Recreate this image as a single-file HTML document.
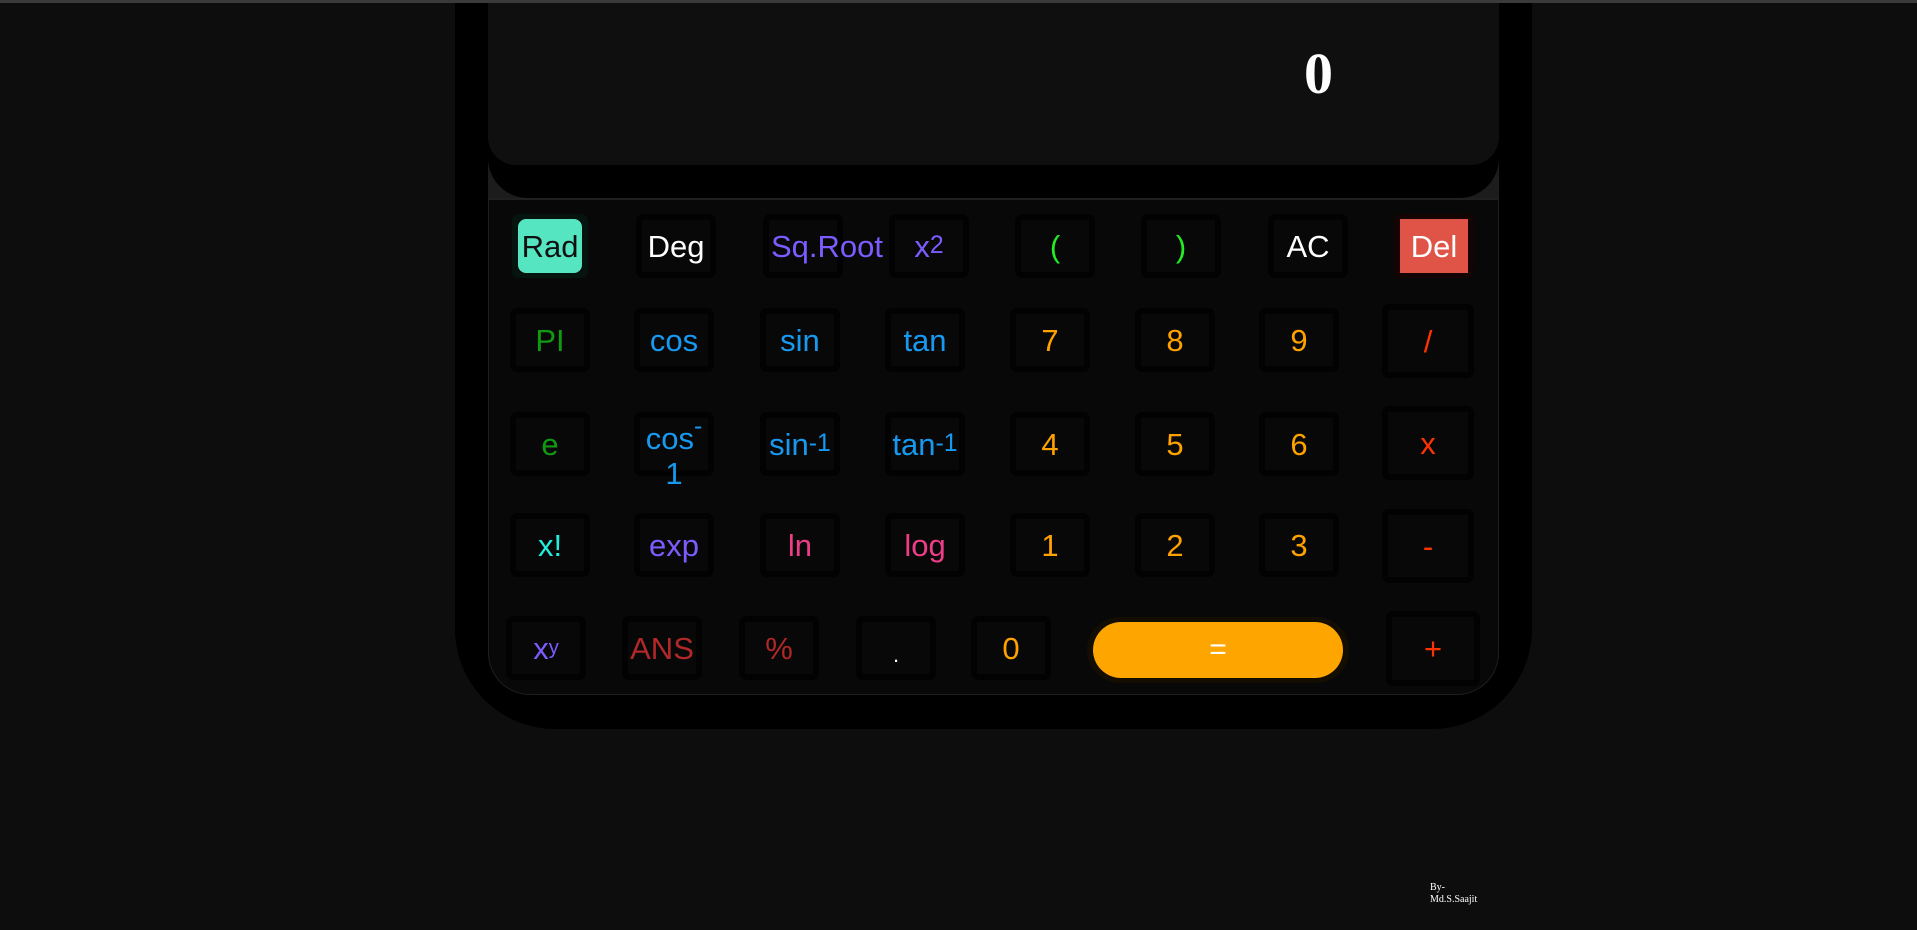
<!DOCTYPE html>
<html><head><meta charset="utf-8"><style>
*{margin:0;padding:0;box-sizing:border-box}
body{width:1917px;height:930px;background:#0d0d0d;position:relative;overflow:hidden;font-family:"Liberation Sans",sans-serif}
.topline{position:absolute;left:0;top:0;width:1917px;height:3px;background:#3a3a3a;z-index:5}
.outer{position:absolute;left:455px;top:0;width:1077px;height:729px;background:#000;border-radius:0 0 100px 100px}
.gray{position:absolute;left:488px;top:160px;width:1011px;height:40px;background:#1c1c1c}
.scrblack{position:absolute;left:488px;top:150px;width:1011px;height:48px;background:#000;border-radius:0 0 40px 40px}
.screen{position:absolute;left:488px;top:0;width:1011px;height:165px;background:#0f0f0f;border-radius:0 0 28px 28px}
.num{position:absolute;left:1304px;top:40px;font-family:"Liberation Serif",serif;font-weight:bold;font-size:58px;color:#fff}
.pad{position:absolute;left:488px;top:198px;width:1011px;height:497px;background:#080808;border:1px solid #1e1e1e;border-top:2px solid #202020;border-radius:0 0 42px 42px}
.b{position:absolute;width:80px;height:64px;background:#080808;border:6px solid #020202;border-radius:7px;display:flex;align-items:center;justify-content:center;font-size:31px;line-height:1}
.big{width:92px;height:74px}
sup{font-size:0.8em;vertical-align:0.6em;line-height:0}
.foot{position:absolute;left:1430px;top:882px;font-family:"Liberation Serif",serif;font-size:10px;line-height:12px;color:#fff}
</style></head><body>
<div class="topline"></div>
<div class="outer"></div>
<div class="gray"></div>
<div class="scrblack"></div>
<div class="screen"></div>
<div class="num">0</div>
<div class="pad"></div>

<div class="b" style="left:512px;top:214px;width:76px;border-color:#06140f"><div style="background:#55e6c1;width:70px;height:54px;border-radius:8px;display:flex;align-items:center;justify-content:center;color:#111">Rad</div></div>
<div class="b" style="left:636px;top:214px;color:#fff">Deg</div>
<div class="b" style="left:763px;top:214px;color:#7c5cff;overflow:visible;white-space:nowrap;justify-content:flex-start;padding-left:2px">Sq.Root</div>
<div class="b" style="left:889px;top:214px;color:#7c5cff">x<sup>2</sup></div>
<div class="b" style="left:1015px;top:214px;color:#22ee22">(</div>
<div class="b" style="left:1141px;top:214px;color:#22ee22">)</div>
<div class="b" style="left:1268px;top:214px;color:#fff">AC</div>
<div class="b" style="left:1394px;top:214px;border-color:#140404;width:80px"><div style="background:#e05448;width:70px;height:54px;display:flex;align-items:center;justify-content:center;color:#fff">Del</div></div>

<div class="b" style="left:510px;top:308px;color:#119911">PI</div>
<div class="b" style="left:634px;top:308px;color:#1899f0">cos</div>
<div class="b" style="left:760px;top:308px;color:#1899f0">sin</div>
<div class="b" style="left:885px;top:308px;color:#1899f0">tan</div>
<div class="b" style="left:1010px;top:308px;color:#ffa200">7</div>
<div class="b" style="left:1135px;top:308px;color:#ffa200">8</div>
<div class="b" style="left:1259px;top:308px;color:#ffa200">9</div>
<div class="b big" style="left:1382px;top:304px;color:#ff3300">/</div>

<div class="b" style="left:510px;top:412px;color:#119911">e</div>
<div class="b" style="left:634px;top:412px;color:#1899f0;flex-direction:column;overflow:visible"><span style="margin-top:24px">cos<sup>-</sup></span><span style="margin-top:4px">1</span></div>
<div class="b" style="left:760px;top:412px;color:#1899f0">sin<sup>-1</sup></div>
<div class="b" style="left:885px;top:412px;color:#1899f0">tan<sup>-1</sup></div>
<div class="b" style="left:1010px;top:412px;color:#ffa200">4</div>
<div class="b" style="left:1135px;top:412px;color:#ffa200">5</div>
<div class="b" style="left:1259px;top:412px;color:#ffa200">6</div>
<div class="b big" style="left:1382px;top:406px;color:#ff3300">x</div>

<div class="b" style="left:510px;top:513px;color:#22eedd">x!</div>
<div class="b" style="left:634px;top:513px;color:#7c5cff">exp</div>
<div class="b" style="left:760px;top:513px;color:#ee3d88">ln</div>
<div class="b" style="left:885px;top:513px;color:#ee3d88">log</div>
<div class="b" style="left:1010px;top:513px;color:#ffa200">1</div>
<div class="b" style="left:1135px;top:513px;color:#ffa200">2</div>
<div class="b" style="left:1259px;top:513px;color:#ffa200">3</div>
<div class="b big" style="left:1382px;top:509px;color:#ff3300">-</div>

<div class="b" style="left:506px;top:616px;color:#7c5cff">x<sup style="font-size:0.65em">y</sup></div>
<div class="b" style="left:622px;top:616px;color:#b02828">ANS</div>
<div class="b" style="left:739px;top:616px;color:#b02828">%</div>
<div class="b" style="left:856px;top:616px;color:#fff;font-size:22px;padding-top:14px">.</div>
<div class="b" style="left:971px;top:616px;color:#ffa200">0</div>
<div class="b" style="left:1087px;top:617px;width:262px;height:66px;border-radius:33px;border-color:#140e02;padding:0"><div style="width:252px;height:56px;border-radius:28px;background:#ffa500;color:#fff;display:flex;align-items:center;justify-content:center;font-size:30px">=</div></div>
<div class="b big" style="left:1386px;top:611px;width:94px;height:75px;color:#ff3300">+</div>

<div class="foot">By-<br>Md.S.Saajit</div>
</body></html>
